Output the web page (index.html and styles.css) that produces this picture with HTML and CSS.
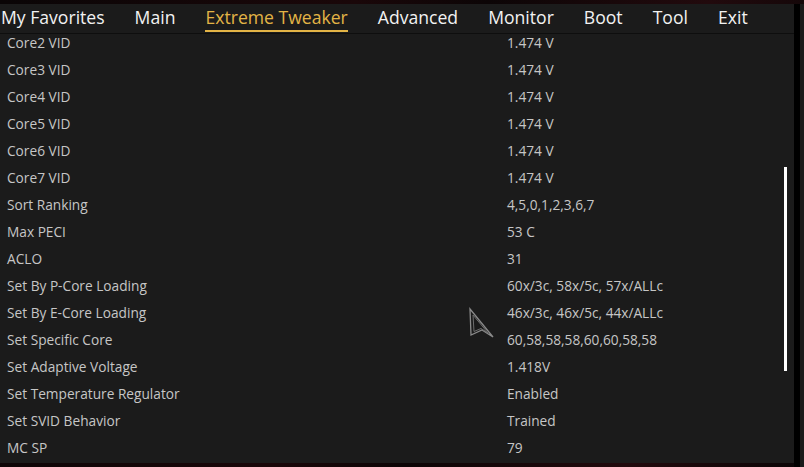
FILE: index.html
```html
<!DOCTYPE html>
<html>
<head>
<meta charset="utf-8">
<link rel="stylesheet" href="styles.css">
</head>
<body>
<div class="screen">
  <div class="panel">
    <nav class="nav">
      <span class="tab">My Favorites</span>
      <span class="tab">Main</span>
      <span class="tab active">Extreme Tweaker</span>
      <span class="tab">Advanced</span>
      <span class="tab">Monitor</span>
      <span class="tab">Boot</span>
      <span class="tab">Tool</span>
      <span class="tab">Exit</span>
    </nav>
    <div class="list">
      <div class="rows">
        <div class="row"><span class="name">Core2 VID</span><span class="val">1.474 V</span></div>
        <div class="row"><span class="name">Core3 VID</span><span class="val">1.474 V</span></div>
        <div class="row"><span class="name">Core4 VID</span><span class="val">1.474 V</span></div>
        <div class="row"><span class="name">Core5 VID</span><span class="val">1.474 V</span></div>
        <div class="row"><span class="name">Core6 VID</span><span class="val">1.474 V</span></div>
        <div class="row"><span class="name">Core7 VID</span><span class="val">1.474 V</span></div>
        <div class="row"><span class="name">Sort Ranking</span><span class="val">4,5,0,1,2,3,6,7</span></div>
        <div class="row"><span class="name">Max PECI</span><span class="val">53 C</span></div>
        <div class="row"><span class="name">ACLO</span><span class="val">31</span></div>
        <div class="row"><span class="name">Set By P-Core Loading</span><span class="val">60x/3c, 58x/5c, 57x/ALLc</span></div>
        <div class="row"><span class="name">Set By E-Core Loading</span><span class="val">46x/3c, 46x/5c, 44x/ALLc</span></div>
        <div class="row"><span class="name">Set Specific Core</span><span class="val">60,58,58,58,60,60,58,58</span></div>
        <div class="row"><span class="name">Set Adaptive Voltage</span><span class="val">1.418V</span></div>
        <div class="row"><span class="name">Set Temperature Regulator</span><span class="val">Enabled</span></div>
        <div class="row"><span class="name">Set SVID Behavior</span><span class="val">Trained</span></div>
        <div class="row"><span class="name">MC SP</span><span class="val">79</span></div>
      </div>
      <div class="scrollbar"></div>
      <svg class="cursor" width="28" height="32" viewBox="0 0 28 32">
        <path d="M2 2 L25 30 L14 23 L3 28 Z" fill="none" stroke="#8a8a8a" stroke-width="1.3" stroke-linejoin="miter"/>
        <path d="M5 8 L20 26 L13 21.5 L6 24.5 Z" fill="none" stroke="#6e6e6e" stroke-width="1"/>
      </svg>
    </div>
  </div>
  <div class="edge"></div>
</div>
</body>
</html>
```

FILE: styles.css
```css
* { box-sizing: border-box; }
html, body {
  margin: 0;
  padding: 0;
  background: #0b0506;
}
.screen {
  width: 804px;
  height: 467px;
  display: flex;
  padding-top: 4px;
  background: linear-gradient(100deg, #0a0506 0%, #1a0709 40%, #0c0506 55%, #220a0d 80%, #0a0506 100%);
  overflow: hidden;
}
.panel {
  width: 794px;
  height: 459px;
  background: #1b1b1b;
  display: flex;
  flex-direction: column;
}
.edge {
  width: 10px;
  height: 100%;
  display: flex;
  background: linear-gradient(90deg, #000 0 6px, #1a1a1a 6px);
}
.nav {
  height: 30px;
  display: flex;
  align-items: flex-start;
  border-bottom: 1px solid #0e0e0e;
  font-family: "Open Sans", sans-serif;
  font-size: 17.6px;
  color: #f2f2f2;
  padding-left: 1px;
}
.tab {
  line-height: 27px;
  margin-right: 30px;
  white-space: nowrap;
}
.tab.active {
  color: #e3b446;
  border-bottom: 2px solid #e3b446;
  line-height: 25px;
  padding-top: 1px;
}
.list {
  position: relative;
  flex: 1;
  overflow: hidden;
}
.rows {
  margin-top: -5px;
  font-family: "Open Sans", sans-serif;
  font-size: 13.7px;
  color: #c6c6c6;
}
.row {
  height: 27px;
  display: flex;
  align-items: center;
  padding-left: 7px;
}
.name { width: 500px; }
.scrollbar {
  position: absolute;
  left: 784px;
  top: 133px;
  width: 3px;
  height: 204px;
  background: #ffffff;
}
.cursor {
  position: absolute;
  left: 468px;
  top: 273px;
}
```
